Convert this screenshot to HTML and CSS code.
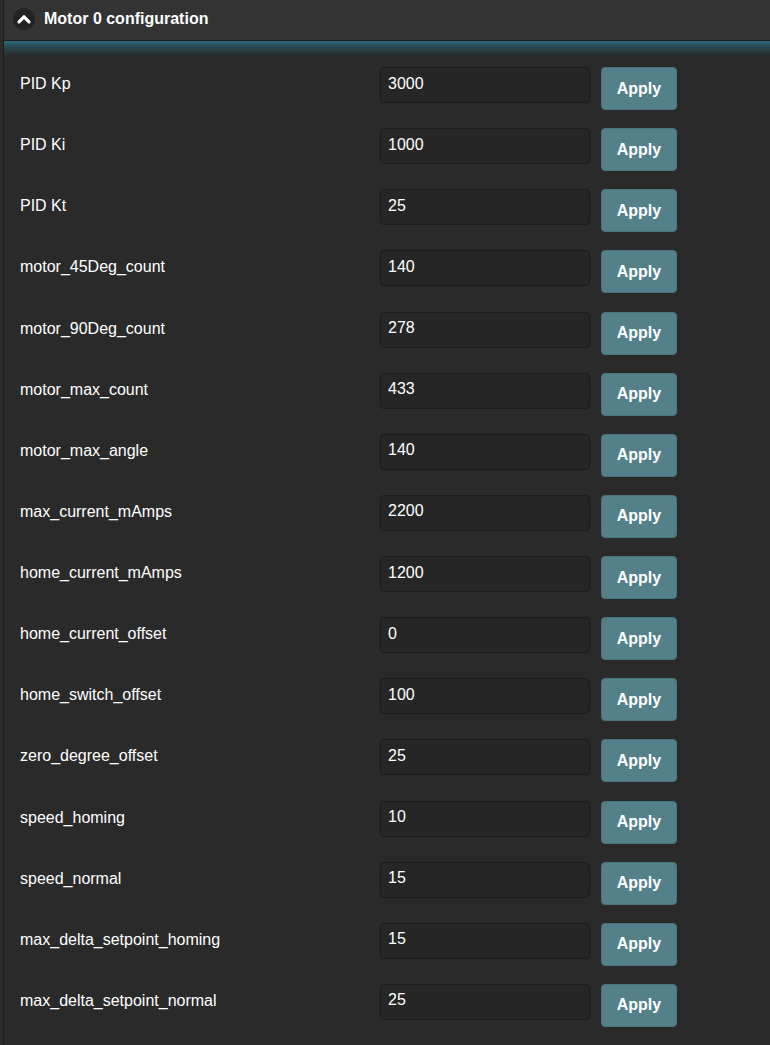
FILE: index.html
```html
<!DOCTYPE html>
<html lang="en">
<head>
    <meta charset="UTF-8">
    <meta name="viewport" content="width=device-width, initial-scale=1.0">
    <title>Motor 0 configuration</title>
    <link rel="stylesheet" href="styles.css">
</head>
<body>
    <div class="panel">
        <div class="panel-header">
            <span class="toggle">
                <svg width="22" height="22" viewBox="0 0 22 22"><path d="M6 13.8 L11 8.8 L16 13.8" fill="none" stroke="#fff" stroke-width="3.2" stroke-linecap="round" stroke-linejoin="round"/></svg>
            </span>
            <span class="title">Motor 0 configuration</span>
        </div>
        <div class="panel-glow"></div>
        <div class="panel-body">
            <div class="row"><label>PID Kp</label><input class="field" type="text" value="3000"><button class="apply">Apply</button></div>
            <div class="row"><label>PID Ki</label><input class="field" type="text" value="1000"><button class="apply">Apply</button></div>
            <div class="row"><label>PID Kt</label><input class="field" type="text" value="25"><button class="apply">Apply</button></div>
            <div class="row"><label>motor_45Deg_count</label><input class="field" type="text" value="140"><button class="apply">Apply</button></div>
            <div class="row"><label>motor_90Deg_count</label><input class="field" type="text" value="278"><button class="apply">Apply</button></div>
            <div class="row"><label>motor_max_count</label><input class="field" type="text" value="433"><button class="apply">Apply</button></div>
            <div class="row"><label>motor_max_angle</label><input class="field" type="text" value="140"><button class="apply">Apply</button></div>
            <div class="row"><label>max_current_mAmps</label><input class="field" type="text" value="2200"><button class="apply">Apply</button></div>
            <div class="row"><label>home_current_mAmps</label><input class="field" type="text" value="1200"><button class="apply">Apply</button></div>
            <div class="row"><label>home_current_offset</label><input class="field" type="text" value="0"><button class="apply">Apply</button></div>
            <div class="row"><label>home_switch_offset</label><input class="field" type="text" value="100"><button class="apply">Apply</button></div>
            <div class="row"><label>zero_degree_offset</label><input class="field" type="text" value="25"><button class="apply">Apply</button></div>
            <div class="row"><label>speed_homing</label><input class="field" type="text" value="10"><button class="apply">Apply</button></div>
            <div class="row"><label>speed_normal</label><input class="field" type="text" value="15"><button class="apply">Apply</button></div>
            <div class="row"><label>max_delta_setpoint_homing</label><input class="field" type="text" value="15"><button class="apply">Apply</button></div>
            <div class="row"><label>max_delta_setpoint_normal</label><input class="field" type="text" value="25"><button class="apply">Apply</button></div>
        </div>
    </div>
</body>
</html>
```

FILE: styles.css
```css
html, body {
    margin: 0;
    padding: 0;
    background: #2a2a2a;
    font-family: "Liberation Sans", Arial, sans-serif;
    color: #fff;
}
.panel {
    margin-left: 3px;
    border-left: 1px solid #1f1f1f;
    min-height: 1045px;
    background: #2a2a2a;
}
.panel-header {
    height: 41px;
    background: #333333;
    border-bottom: 1px solid #1c1c1c;
    display: flex;
    align-items: center;
    padding-left: 9px;
    box-sizing: border-box;
}
.toggle {
    width: 22px;
    height: 22px;
    border-radius: 50%;
    background: #232323;
    display: flex;
    margin-top: -3px;
}
.title {
    margin-left: 9px;
    margin-top: -3px;
    font-size: 16px;
    font-weight: bold;
}
.panel-glow {
    height: 15px;
    background: linear-gradient(to bottom, #2d6a80 0%, #2b4a56 35%, #2a2a2a 100%);
}
.panel-body {
    padding: 11px 0 0 16px;
}
.row {
    display: flex;
    align-items: flex-start;
    height: 61.13px;
}
.row label {
    width: 360px;
    font-size: 16px;
    padding-top: 8px;
    line-height: 18px;
}
.field {
    width: 210px;
    height: 36px;
    box-sizing: border-box;
    background: #262626;
    border: 1px solid #1b1b1b;
    border-radius: 4px;
    color: #fff;
    font-family: inherit;
    font-size: 16px;
    padding: 0 7px 3px;
    margin: 0;
}
.apply {
    width: 76px;
    height: 43px;
    margin-left: 11px;
    background: #54808a;
    border: 1px solid #4a737c;
    border-radius: 4px;
    color: #fff;
    font-family: inherit;
    font-size: 16px;
    font-weight: bold;
    padding: 0;
    cursor: pointer;
}
```
